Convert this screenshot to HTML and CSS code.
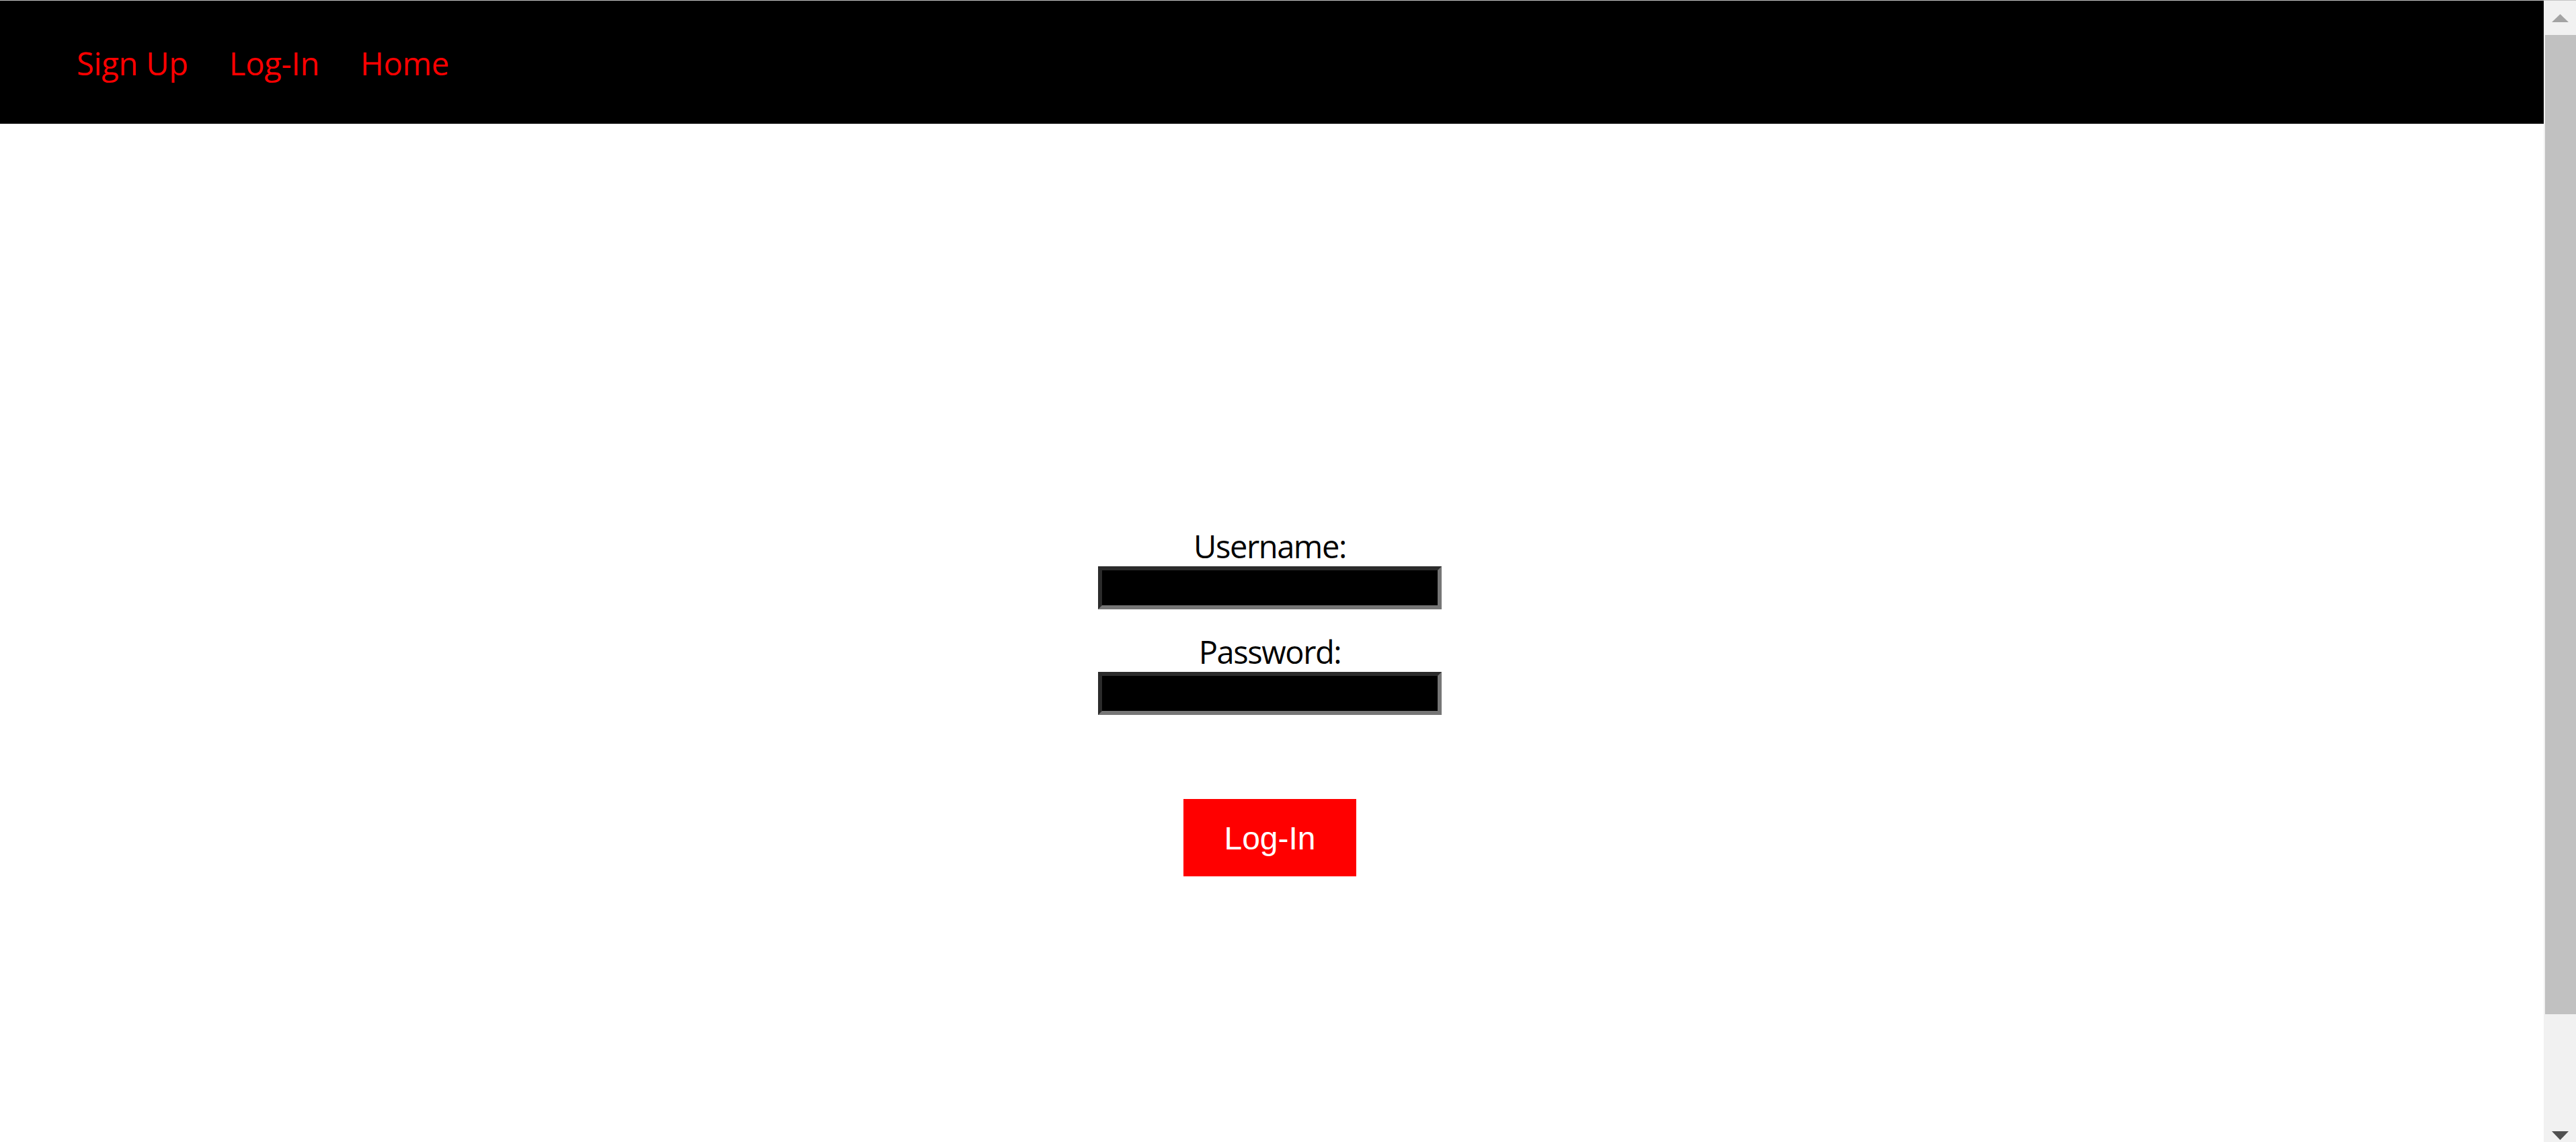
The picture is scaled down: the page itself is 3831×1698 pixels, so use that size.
FILE: index.html
```html
<!DOCTYPE html>
<html lang="en">
<head>
<meta charset="utf-8">
<title>Log-In</title>
<link rel="stylesheet" href="styles.css">
</head>
<body>
<div class="app">
  <nav class="topnav">
    <a class="navlink" href="#">Sign Up</a>
    <a class="navlink" href="#">Log-In</a>
    <a class="navlink" href="#">Home</a>
  </nav>
  <main class="page">
    <form class="login-form">
      <label class="field-label" for="username">Username:</label>
      <input class="field-input" type="text" id="username" name="username">
      <label class="field-label field-label-gap" for="password">Password:</label>
      <input class="field-input" type="password" id="password" name="password">
      <button class="submit-btn" type="button">Log-In</button>
    </form>
  </main>
</div>
<div class="scrollbar" aria-hidden="true">
  <div class="sb-btn sb-up">
    <svg width="25" height="12" viewBox="0 0 25 12"><polygon points="12.5,0 25,12 0,12" fill="#a3a3a3"/></svg>
  </div>
  <div class="sb-track">
    <div class="sb-thumb"></div>
  </div>
  <div class="sb-btn sb-down">
    <svg width="25" height="13" viewBox="0 0 25 13"><polygon points="0,0 25,0 12.5,13" fill="#505050"/></svg>
  </div>
</div>
</body>
</html>
```
FILE: styles.css
```css
html {
  background: #ffffff;
}

body {
  margin: 0;
  display: flex;
  align-items: flex-start;
  border-top: 1px solid #c4c4c4;
  font-family: "Open Sans", "Noto Sans", sans-serif;
  color: #000000;
}

.app {
  flex: 1;
  min-width: 0;
}

.topnav {
  box-sizing: border-box;
  height: 183px;
  background: #000000;
  display: flex;
  gap: 61px;
  padding: 61px 0 0 114px;
}

.navlink {
  color: #ff0000;
  text-decoration: none;
  font-size: 47px;
  letter-spacing: -0.2px;
  line-height: 65px;
  height: 65px;
}

.page {
  padding: 598px 6px 555px 0;
}

.login-form {
  display: flex;
  flex-direction: column;
  align-items: center;
  margin: 0;
}

.field-label {
  display: block;
  font-size: 47px;
  letter-spacing: -1.4px;
  line-height: 60px;
}

.field-label-gap {
  margin-top: 33px;
}

.field-input {
  display: block;
  box-sizing: border-box;
  width: 511px;
  height: 64px;
  margin: 0;
  padding: 0;
  background: #000000;
  border-style: solid;
  border-width: 6px;
  border-color: #2b2b2b #767676 #767676 #2b2b2b;
  color: #ffffff;
}

.submit-btn {
  margin-top: 125px;
  padding: 31px 60.5px 29px;
  border: none;
  background: #ff0000;
  color: #ffffff;
  font-family: "Liberation Sans", Arial, sans-serif;
  font-size: 48px;
  line-height: 55px;
  cursor: pointer;
}

.scrollbar {
  flex: none;
  width: 48px;
  height: calc(100vh - 1px);
  display: flex;
  flex-direction: column;
  background: #f1f1f1;
}

.sb-btn {
  flex: none;
  height: 51px;
  display: flex;
  justify-content: center;
  align-items: flex-start;
}

.sb-btn svg {
  display: block;
}

.sb-up {
  box-sizing: border-box;
  padding: 20px 0 0 1px;
}

.sb-down {
  box-sizing: border-box;
  padding: 35px 0 0 1px;
}

.sb-track {
  flex: 1;
  display: flex;
  flex-direction: column;
}

.sb-thumb {
  height: 1456px;
  margin-left: 2px;
  background: #c1c1c1;
}
```
